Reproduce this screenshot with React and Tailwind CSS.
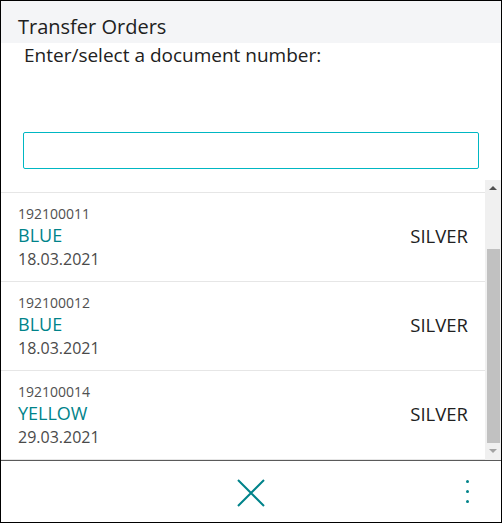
import React from 'react';

const orders = [
  { no: '192100011', name: 'BLUE', loc: 'SILVER', date: '18.03.2021' },
  { no: '192100012', name: 'BLUE', loc: 'SILVER', date: '18.03.2021' },
  { no: '192100014', name: 'YELLOW', loc: 'SILVER', date: '29.03.2021' },
];

export default function App() {
  return (
    <div
      className="w-[502px] h-[523px] border border-black bg-white flex flex-col text-[#212121]"
      style={{ fontFamily: '"Open Sans", "Noto Sans", sans-serif' }}
    >
      {/* Header */}
      <div className="h-[42px] bg-[#f4f5f7] flex items-end pl-[17px] pb-[3px]">
        <h1 className="text-[20px] leading-[27px]">Transfer Orders</h1>
      </div>

      {/* Prompt + input */}
      <div className="h-[137px] flex flex-col px-[22px]">
        <p className="text-[19px] leading-[24px] pl-[1px]">Enter/select a document number:</p>
        <input
          type="text"
          className="mt-[65px] h-[37px] w-[456px] border border-[#00b7c3] rounded-[2px] outline-none px-2"
        />
      </div>

      {/* List */}
      <div className="h-[280px] flex overflow-hidden">
        <div className="flex-1 pt-[12px]">
          {orders.map((o) => (
            <div key={o.no} className="border-t border-[#e6e6e6] pt-[11px] pb-[11px] pl-[17px] pr-[17px]">
              <div className="text-[14px] leading-[19px] text-[#505050]">{o.no}</div>
              <div className="flex justify-between items-center leading-[25px]">
                <span className="text-[18px] text-[#00838a]">{o.name}</span>
                <span className="text-[18.5px]">{o.loc}</span>
              </div>
              <div className="text-[16px] leading-[22px] text-[#4a4a4a]">{o.date}</div>
            </div>
          ))}
          <div className="border-t border-[#e6e6e6]" />
        </div>

        {/* Scrollbar */}
        <div className="w-[16px] bg-[#f0f0f0] flex flex-col">
          <div className="h-[16px] flex items-center justify-center">
            <div className="w-0 h-0 border-l-[4px] border-r-[4px] border-b-[4px] border-l-transparent border-r-transparent border-b-[#505050]" />
          </div>
          <div className="h-[53px]" />
          <div className="h-[194px] ml-[2px] w-[13px] bg-[#c1c1c1]" />
          <div className="h-[16px] flex items-center justify-center">
            <div className="w-0 h-0 border-l-[4px] border-r-[4px] border-t-[4px] border-l-transparent border-r-transparent border-t-[#a3a3a3]" />
          </div>
        </div>
      </div>

      {/* Footer */}
      <div className="flex-1 border-t border-[#5a5a5a] relative flex items-center justify-center">
        <svg width="28" height="28" viewBox="0 0 28 28" className="mt-[2px]">
          <path d="M1 1 L27 27 M27 1 L1 27" stroke="#00838a" strokeWidth="2" fill="none" />
        </svg>
        <div className="absolute right-[32px] top-[19px] flex flex-col gap-[7px]">
          <span className="w-[3px] h-[3px] rounded-full bg-[#00838a]" />
          <span className="w-[3px] h-[3px] rounded-full bg-[#00838a]" />
          <span className="w-[3px] h-[3px] rounded-full bg-[#00838a]" />
        </div>
      </div>
    </div>
  );
}
